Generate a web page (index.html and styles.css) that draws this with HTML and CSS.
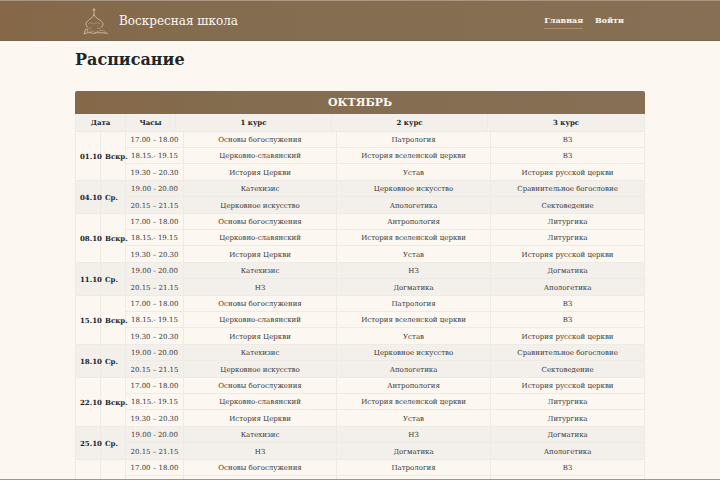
FILE: index.html
```
<!DOCTYPE html>
<html lang="ru">
<head>
<meta charset="utf-8">
<title>Воскресная школа</title>
<link rel="stylesheet" href="styles.css">
</head>
<body>
<header class="header">
  <a class="brand" href="#">
    <svg class="logo" viewBox="0 0 28 30" aria-hidden="true">
      <path d="M12 2v7M10.500 4h3"/>
      <path d="M6.500 22C4.800 21 3.800 19.500 4 17.800 4.500 14 10.500 13 12 8.500 13.500 13 20.500 14 21 17.800c.2 1.700-.8 3.200-2.500 4.200"/>
      <path class="thin" d="M6 18c2-1.500 4-1.500 6 0 2.500-1.500 4.500-1.500 6.500 0M7 22.200h3M15 22.200h3"/>
      <path d="M2 28l1.500-4.500c2-1 3 .5 1.600 2.200M2 28c3-1.600 6-1.800 9.500-.6 3.500-1 7-1 14.500 0"/>
      <path class="thin" d="M7 25.500c3-1.200 5 .3 6.500 1.300 2-1.800 5-2.600 7.500-2.400l3 2.600"/>
    </svg>
    <span>Воскресная школа</span>
  </a>
  <nav class="nav">
    <a class="active" href="#">Главная</a>
    <a href="#">Войти</a>
  </nav>
</header>
<main class="content">
  <h1>Расписание</h1>
  <table class="schedule">
    <caption>ОКТЯБРЬ</caption>
    <colgroup>
      <col class="c-date"><col class="c-date"><col class="c-time"><col class="c-time-rest">
      <col class="c-first"><col class="c-first-rest"><col class="c-second"><col class="c-second-rest"><col class="c-third">
    </colgroup>
    <thead>
      <tr><th colspan="2">Дата</th><th>Часы</th><th colspan="2">1 курс</th><th colspan="2">2 курс</th><th colspan="2">3 курс</th></tr>
    </thead>
  </table>
</main>
<script src="schedule.js"></script>
</body>
</html>
```

FILE: schedule.js
```
const sundayTimes = ["17.00 – 18.00", "18.15.- 19.15", "19.30 – 20.30"];
const wednesdayTimes = ["19.00 - 20.00", "20.15 – 21.15"];
const sundayA = [
  ["Основы богослужения", "Патрология", "ВЗ"],
  ["Церковно-славянский", "История вселенской церкви", "ВЗ"],
  ["История Церкви", "Устав", "История русской церкви"]
];
const sundayB = [
  ["Основы богослужения", "Антропология", "Литургика"],
  ["Церковно-славянский", "История вселенской церкви", "Литургика"],
  ["История Церкви", "Устав", "История русской церкви"]
];
const sundayC = [
  ["Основы богослужения", "Антропология", "История русской церкви"],
  ["Церковно-славянский", "История вселенской церкви", "Литургика"],
  ["История Церкви", "Устав", "Литургика"]
];
const wednesdayA = [
  ["Катехизис", "Церковное искусство", "Сравнительное богословие"],
  ["Церковное искусство", "Апологетика", "Сектоведение"]
];
const wednesdayB = [
  ["Катехизис", "НЗ", "Догматика"],
  ["НЗ", "Догматика", "Апологетика"]
];
const days = [
  ["01.10", sundayA], ["04.10", wednesdayA],
  ["08.10", sundayB], ["11.10", wednesdayB],
  ["15.10", sundayA], ["18.10", wednesdayA],
  ["22.10", sundayC], ["25.10", wednesdayB],
  ["29.10", sundayA]
];

const table = document.querySelector(".schedule");
for (const [date, lessons] of days) {
  const sunday = lessons.length === 3;
  const times = sunday ? sundayTimes : wednesdayTimes;
  const body = table.appendChild(document.createElement("tbody"));
  body.className = sunday ? "sunday" : "wednesday";
  body.innerHTML = lessons.map((row, i) => {
    const head = i ? "" :
      `<th rowspan="${lessons.length}">${date}</th><th rowspan="${lessons.length}">${sunday ? "Вскр." : "Ср."}</th>`;
    return `<tr>${head}<td colspan="2">${times[i]}</td><td colspan="2">${row[0]}</td><td colspan="2">${row[1]}</td><td>${row[2]}</td></tr>`;
  }).join("");
}
```

FILE: styles.css
```
* { box-sizing: border-box; }

body {
  margin: 0;
  height: 100vh;
  overflow: hidden;
  display: flex;
  flex-direction: column;
  border-bottom: 1px solid #999793;
  background: #fcf7f0;
  color: #212529;
  font-family: Georgia, "DejaVu Serif", serif;
}

.header {
  flex: none;
  display: flex;
  align-items: center;
  justify-content: space-between;
  height: 41px;
  padding: 0 96px 0 82px;
  border-top: 1px solid #aa9781;
  border-bottom: 1px solid #78674f;
  background: linear-gradient(90deg, #866848, #836c4f 30%, #876f55);
}

.brand {
  display: flex;
  align-items: center;
  gap: 9px;
  color: #fcf7f0;
  font-size: 12px;
  text-decoration: none;
}

.logo {
  width: 28px;
  height: 30px;
  fill: none;
  stroke: #d9c6ae;
  stroke-width: 0.8;
}

.logo .thin { stroke-width: 0.4; }

.nav { display: flex; gap: 12px; }

.nav a {
  padding-bottom: 1px;
  border-bottom: 1px solid transparent;
  color: #fcf7f0;
  font-size: 8px;
  font-weight: bold;
  line-height: 14px;
  text-decoration: none;
}

.nav .active { border-color: #ab8e69; }

.content {
  flex: 1;
  min-height: 0;
  padding: 7px 75px 0;
}

h1 {
  margin: 0 0 19px;
  font-size: 16px;
  line-height: 24px;
}

.schedule {
  width: 100%;
  table-layout: fixed;
  border-collapse: separate;
  border-spacing: 0;
  border-left: 1px solid #eeeae4;
  font-size: 7px;
}

.schedule caption {
  height: 23px;
  border-radius: 2px 2px 0 0;
  background: linear-gradient(90deg, #866848, #836c4f 30%, #876f55);
  color: #fcf7f0;
  font-size: 11px;
  font-weight: bold;
  line-height: 23px;
}

.c-date { width: 25px; }
.c-time { width: 50px; }
.c-time-rest { width: 8px; }
.c-first { width: 148px; }
.c-first-rest { width: 5px; }
.c-second { width: 151px; }
.c-second-rest { width: 3px; }
.c-third { width: 154px; }

.schedule th,
.schedule td {
  height: 16px;
  padding: 1px 0 0;
  border-right: 1px solid #eeeae4;
  border-bottom: 1px solid #eeeae4;
  line-height: 14px;
  text-align: center;
  white-space: nowrap;
}

.schedule td { color: #36383a; }
.schedule thead th { height: 18px; }
.schedule tbody th { padding-left: 4px; text-align: left; }
.schedule tbody tr:last-child td { height: 17px; }
.schedule thead,
.wednesday { background: #f3efea; }
```
